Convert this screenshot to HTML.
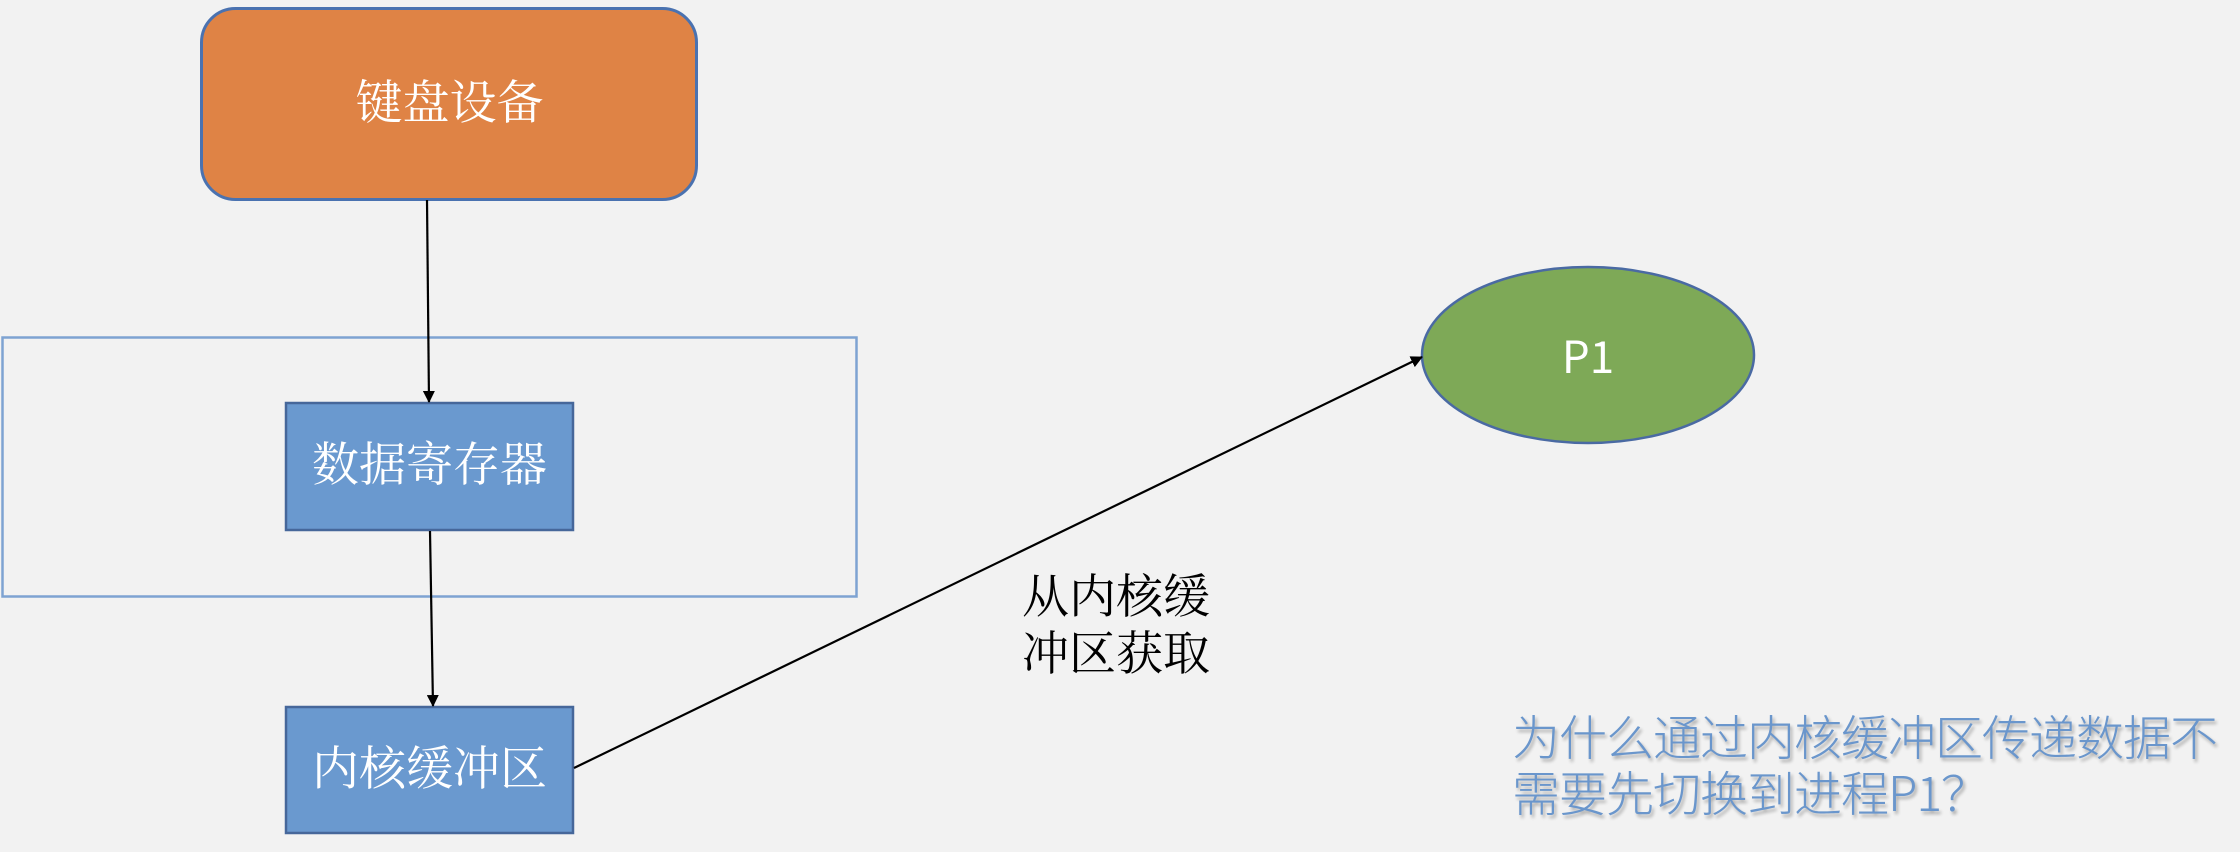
<!DOCTYPE html>
<html><head><meta charset="utf-8"><style>
html,body{margin:0;padding:0;}
body{width:2240px;height:852px;background:#f2f2f2;position:relative;overflow:hidden;}
.t{position:absolute;font-family:"Liberation Serif","Noto Serif CJK SC",serif;color:#fff;font-size:47px;white-space:nowrap;}
.q{position:absolute;left:1512px;top:706px;font-family:"Noto Sans CJK SC",sans-serif;font-weight:300;font-size:48px;line-height:56px;color:#6a96cc;text-shadow:2px 3px 3px rgba(0,0,0,0.3);white-space:nowrap;letter-spacing:-1px;}
</style></head><body>
<svg width="2240" height="852" style="position:absolute;left:0;top:0">
<defs><marker id="a" markerWidth="12" markerHeight="12" refX="11" refY="6" orient="auto" markerUnits="userSpaceOnUse" viewBox="0 0 12 12"><path d="M0,0 L12,6 L0,12 z" fill="#000"/></marker></defs>
<rect x="201.5" y="8.5" width="495" height="191" rx="34" fill="#df8345" stroke="#4a72b0" stroke-width="3"/>
<rect x="2.5" y="337.5" width="854" height="259" fill="none" stroke="#7ea3d2" stroke-width="2.5"/>
<rect x="286" y="403" width="287" height="127" fill="#6a99cf" stroke="#46679a" stroke-width="2.5"/>
<rect x="286" y="707" width="287" height="126" fill="#6a99cf" stroke="#46679a" stroke-width="2.5"/>
<ellipse cx="1588" cy="355" rx="166" ry="88" fill="#7ea957" stroke="#4a6aa3" stroke-width="2.5"/>
<line x1="427" y1="200" x2="429" y2="402" stroke="#000" stroke-width="2.2" marker-end="url(#a)"/>
<line x1="430" y1="531" x2="433" y2="706" stroke="#000" stroke-width="2.2" marker-end="url(#a)"/>
<line x1="574" y1="768" x2="1422" y2="357" stroke="#000" stroke-width="2.2" marker-end="url(#a)"/>
</svg>
<div class="t" style="left:201px;width:497px;top:75px;text-align:center;line-height:58px">键盘设备</div>
<div class="t" style="left:286px;width:287px;top:437px;text-align:center;line-height:58px">数据寄存器</div>
<div class="t" style="left:286px;width:287px;top:741px;text-align:center;line-height:58px">内核缓冲区</div>
<div style="position:absolute;left:1422px;width:332px;top:325px;text-align:center;font-family:'Noto Sans CJK SC',sans-serif;color:#fff;font-size:44px;line-height:58px">P1</div>
<div class="t" style="left:1022px;top:570px;color:#000;font-size:47px;line-height:57px">从内核缓<br>冲区获取</div>
<div class="q">为什么通过内核缓冲区传递数据不<br>需要先切换到进程P1？</div>
</body></html>
